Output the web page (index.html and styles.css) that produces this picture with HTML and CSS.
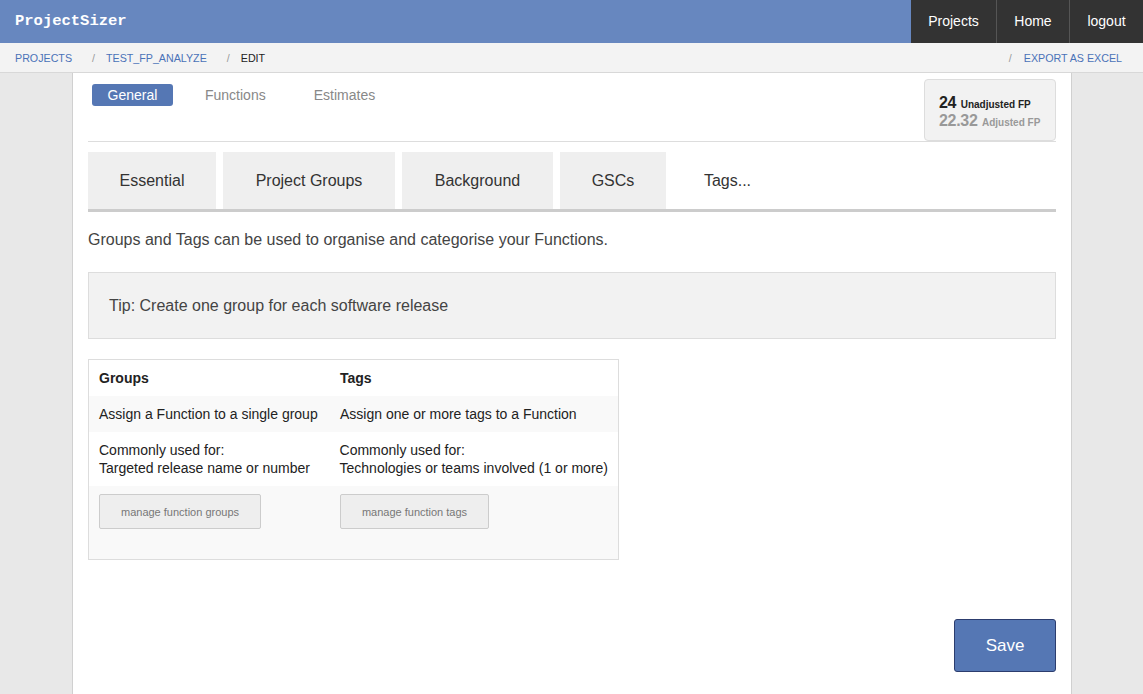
FILE: index.html
```html
<!DOCTYPE html>
<html>
<head>
<meta charset="utf-8">
<link rel="stylesheet" href="styles.css">
</head>
<body>
<header class="topbar">
  <div class="logo">ProjectSizer</div>
  <nav class="topnav">
    <a class="navlink nav-projects">Projects</a>
    <a class="navlink nav-home">Home</a>
    <a class="navlink nav-logout">logout</a>
  </nav>
</header>
<div class="crumbs">
  <div class="crumbs-left">
    <a class="crumb">PROJECTS</a><span class="sep">/</span><a class="crumb">TEST_FP_ANALYZE</a><span class="sep">/</span><span class="crumb-current">EDIT</span>
  </div>
  <div class="crumbs-right">
    <span class="sep">/</span><a class="crumb">EXPORT AS EXCEL</a>
  </div>
</div>
<main class="page">
  <div class="head-row">
    <div class="pills">
      <span class="pill active">General</span>
      <span class="pill">Functions</span>
      <span class="pill pill-est">Estimates</span>
    </div>
    <div class="fpbox">
      <div class="fp-line"><span class="fp-num">24</span> <span class="fp-label">Unadjusted FP</span></div>
      <div class="fp-line adj"><span class="fp-num">22.32</span> <span class="fp-label">Adjusted FP</span></div>
    </div>
  </div>
  <div class="tabs">
    <span class="tab tab-essential">Essential</span>
    <span class="tab tab-groups">Project Groups</span>
    <span class="tab tab-bg">Background</span>
    <span class="tab tab-gsc">GSCs</span>
    <span class="tab tab-tags active">Tags...</span>
  </div>
  <p class="intro">Groups and Tags can be used to organise and categorise your Functions.</p>
  <div class="tip">Tip: Create one group for each software release</div>
  <div class="gt-table">
    <div class="row head">
      <div class="cell c1">Groups</div>
      <div class="cell c2">Tags</div>
    </div>
    <div class="row shade">
      <div class="cell c1">Assign a Function to a single group</div>
      <div class="cell c2">Assign one or more tags to a Function</div>
    </div>
    <div class="row">
      <div class="cell c1">Commonly used for:<br>Targeted release name or number</div>
      <div class="cell c2">Commonly used for:<br>Technologies or teams involved (1 or more)</div>
    </div>
    <div class="row shade btnrow">
      <div class="cell c1"><button class="small-btn w-groups">manage function groups</button></div>
      <div class="cell c2"><button class="small-btn w-tags">manage function tags</button></div>
    </div>
  </div>
  <div class="save-row">
    <button class="save">Save</button>
  </div>
</main>
</body>
</html>
```
FILE: styles.css
```css
html, body {
  margin: 0;
  padding: 0;
}
body {
  background: #e8e8e8;
  font-family: "Liberation Sans", Arial, Helvetica, sans-serif;
  color: #333;
  height: 694px;
  overflow: hidden;
}
.topbar {
  height: 43px;
  background: #6787bf;
  display: flex;
  justify-content: space-between;
  align-items: stretch;
}
.logo {
  font-family: "Liberation Mono", "Courier New", monospace;
  font-weight: bold;
  font-size: 15.5px;
  color: #fff;
  padding-left: 15px;
  line-height: 42px;
}
.topnav {
  display: flex;
  background: #333;
}
.navlink {
  color: #fff;
  font-size: 14px;
  line-height: 42px;
  text-align: center;
  border-left: 1px solid #555;
  box-sizing: border-box;
}
.nav-projects { width: 85px; border-left: none; }
.nav-home { width: 73px; }
.nav-logout { width: 74px; }
.crumbs {
  height: 30px;
  background: #f3f3f3;
  border-bottom: 1px solid #d8d8d8;
  display: flex;
  justify-content: space-between;
  align-items: center;
  font-size: 10.7px;
  padding: 0 21px 0 15px;
  box-sizing: border-box;
}
.crumb { color: #4a72b8; }
.crumb-current { color: #222; }
.sep {
  color: #999;
  margin: 0 11px 0 20px;
}
.crumbs-right .sep { margin: 0 12px 0 0; }
.page {
  background: #fff;
  width: 1000px;
  margin: 0 0 0 72px;
  border-left: 1px solid #d0d0d0;
  border-right: 1px solid #d0d0d0;
  padding: 0 15px;
  box-sizing: border-box;
  height: 621px;
}
.head-row {
  display: flex;
  justify-content: space-between;
  border-bottom: 1px solid #ddd;
  padding-top: 6px;
}
.pills {
  display: flex;
  align-items: flex-start;
  padding-top: 5px;
  padding-left: 4px;
}
.pill {
  font-size: 14px;
  color: #888;
  line-height: 22px;
  padding: 0 16px;
  border-radius: 3px;
}
.pill.active {
  background: #5577b4;
  color: #fff;
  width: 81px;
  box-sizing: border-box;
  text-align: center;
  padding: 0;
  margin-right: 16px;
}
.pill-est { margin-left: 16px; }
.fpbox {
  width: 132px;
  height: 62px;
  box-sizing: border-box;
  background: #f2f2f2;
  border: 1px solid #ddd;
  border-radius: 4px;
  padding: 15px 0 0 14px;
}
.fp-line {
  line-height: 16px;
  color: #222;
  font-weight: bold;
}
.fp-num { font-size: 16px; letter-spacing: -0.3px; }
.fp-label { font-size: 10px; }
.fp-line.adj { color: #999; }
.tabs {
  display: flex;
  gap: 7px;
  margin-top: 10px;
  border-bottom: 3px solid #ccc;
}
.tab {
  height: 57px;
  line-height: 57px;
  font-size: 16px;
  background: #efefef;
  color: #333;
  text-align: center;
  box-sizing: border-box;
}
.tab-essential { width: 128px; }
.tab-groups { width: 172px; }
.tab-bg { width: 151px; }
.tab-gsc { width: 106px; }
.tab-tags { width: 123px; margin-left: -7px; }
.tab.active { background: #fff; }
.intro {
  font-size: 16px;
  color: #444;
  margin: 18px 0 0;
  line-height: 20px;
}
.tip {
  margin-top: 22px;
  background: #f2f2f2;
  border: 1px solid #ddd;
  height: 67px;
  box-sizing: border-box;
  padding-left: 20px;
  line-height: 65px;
  font-size: 16px;
  color: #444;
}
.gt-table {
  margin-top: 20px;
  width: 531px;
  border: 1px solid #ddd;
  box-sizing: border-box;
  font-size: 14px;
  color: #222;
}
.row {
  display: flex;
}
.row.shade { background: #f9f9f9; }
.cell {
  padding: 9px 10px;
  line-height: 18px;
  box-sizing: border-box;
  white-space: nowrap;
}
.c1 { width: 241px; }
.c2 { flex: 1; }
.row.head .cell { font-weight: bold; }
.btnrow { height: 73px; }
.btnrow .cell { padding-top: 8px; }
.small-btn {
  font-family: "Liberation Sans", Arial, sans-serif;
  font-size: 11px;
  color: #777;
  background: #eee;
  border: 1px solid #ccc;
  border-radius: 2px;
  height: 35px;
  padding: 0;
}
.w-groups { width: 162px; }
.w-tags { width: 149px; }
.save-row {
  display: flex;
  justify-content: flex-end;
  margin-top: 59px;
}
.save {
  width: 102px;
  height: 53px;
  background: #5577b4;
  border: 1px solid #2c3d6e;
  border-radius: 3px;
  color: #fff;
  font-family: "Liberation Sans", Arial, sans-serif;
  font-size: 17px;
}
```
